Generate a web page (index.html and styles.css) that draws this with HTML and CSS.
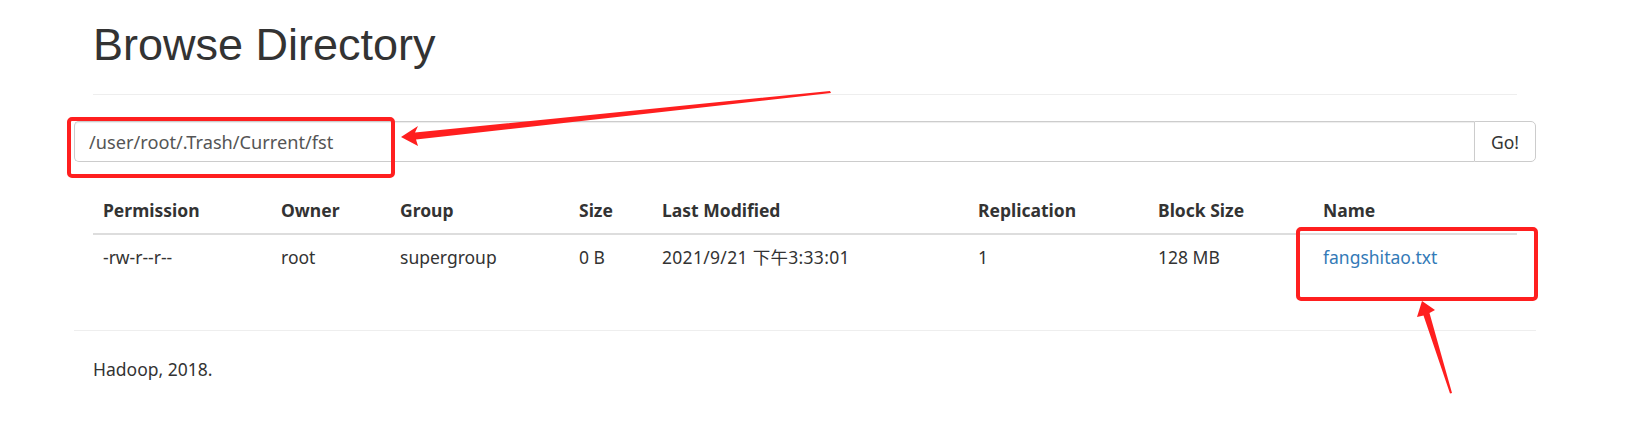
FILE: index.html
```html
<!DOCTYPE html>
<html lang="en">
<head>
<meta charset="utf-8">
<title>Browsing HDFS</title>
<link rel="stylesheet" href="styles.css">
</head>
<body>
<div class="page">
  <div class="inner">
    <div class="page-header">
      <h1>Browse Directory</h1>
    </div>
  </div>

  <form class="input-group">
    <div class="path-input">/user/root/.Trash/Current/fst</div>
    <button type="button" class="go-btn">Go!</button>
  </form>

  <div class="inner">
    <table class="listing">
      <thead>
        <tr>
          <th class="c-perm">Permission</th>
          <th class="c-owner">Owner</th>
          <th class="c-group">Group</th>
          <th class="c-size">Size</th>
          <th class="c-mod">Last Modified</th>
          <th class="c-rep">Replication</th>
          <th class="c-block">Block Size</th>
          <th class="c-name">Name</th>
        </tr>
      </thead>
      <tbody>
        <tr>
          <td>-rw-r--r--</td>
          <td>root</td>
          <td>supergroup</td>
          <td>0 B</td>
          <td class="date">2021/9/21 下午3:33:01</td>
          <td>1</td>
          <td>128 MB</td>
          <td><a href="#" class="file-link">fangshitao.txt</a></td>
        </tr>
      </tbody>
    </table>
  </div>

  <hr class="footer-rule">
  <div class="inner">
    <p class="footer-text">Hadoop, 2018.</p>
  </div>
</div>

<svg class="annotations" width="1648" height="433" viewBox="0 0 1648 433" xmlns="http://www.w3.org/2000/svg">
  <rect x="69" y="119" width="324" height="57" rx="3" ry="3" fill="none" stroke="#ff1f1f" stroke-width="4"/>
  <rect x="1298" y="229" width="238" height="70" rx="3" ry="3" fill="none" stroke="#ff1f1f" stroke-width="4"/>
  <polygon fill="#ff1f1f" points="401,137 418,126 415,132.5 830,91 831,93 416,139.5 418,146"/>
  <polygon fill="#ff1f1f" points="1422,301 1435,310 1429.5,313 1452,393 1450,393.5 1423.5,315.5 1417,317"/>
</svg>
</body>
</html>
```

FILE: styles.css
```css
html, body {
  margin: 0;
  padding: 0;
  background: #ffffff;
}

body {
  font-family: "Noto Sans", "Noto Sans CJK SC", sans-serif;
  font-size: 17.5px;
  line-height: 25px;
  color: #333333;
  position: relative;
  width: 1648px;
  height: 433px;
  overflow: hidden;
}

.page {
  width: 1462px;
  margin-left: 74px;
}

.inner {
  padding: 0 19px;
}

.page-header {
  padding-top: 20px;
  padding-bottom: 24px;
  border-bottom: 1px solid #eeeeee;
}

.page-header h1 {
  margin: 0;
  font-family: "Liberation Sans", Arial, sans-serif;
  font-size: 45px;
  font-weight: normal;
  line-height: 50px;
  color: #333333;
}

.input-group {
  display: flex;
  margin: 26px 0 0 0;
  height: 41px;
}

.path-input {
  flex: 1;
  display: flex;
  align-items: center;
  padding: 2px 14px 0 14px;
  border: 1px solid #cccccc;
  border-right: none;
  border-radius: 5px 0 0 5px;
  box-shadow: inset 0 1px 1px rgba(0, 0, 0, 0.075);
  color: #555555;
  font-size: 18.2px;
}

.go-btn {
  width: 62px;
  height: 41px;
  margin: 0;
  padding: 0;
  border: 1px solid #cccccc;
  border-radius: 0 5px 5px 0;
  background: #ffffff;
  font-family: "Noto Sans", sans-serif;
  font-size: 17.5px;
  color: #333333;
}

.listing {
  width: 100%;
  margin-top: 26px;
  border-collapse: collapse;
  border-spacing: 0;
  table-layout: fixed;
}

.listing th,
.listing td {
  padding: 10px;
  text-align: left;
  vertical-align: top;
  line-height: 25px;
  white-space: nowrap;
}

.listing th {
  font-weight: bold;
  border-bottom: 2px solid #dddddd;
}

.listing .date {
  letter-spacing: 0.3px;
}

.c-perm { width: 158px; }
.c-owner { width: 99px; }
.c-group { width: 159px; }
.c-size { width: 63px; }
.c-mod { width: 296px; }
.c-rep { width: 160px; }
.c-block { width: 145px; }
.c-name { width: 184px; }

.file-link {
  color: #337ab7;
  text-decoration: none;
}

.footer-rule {
  margin: 50px 0 0 0;
  border: 0;
  border-top: 1px solid #eeeeee;
  height: 0;
}

.footer-text {
  margin: 26px 0 0 0;
}

.annotations {
  position: absolute;
  top: 0;
  left: 0;
  pointer-events: none;
}
```
